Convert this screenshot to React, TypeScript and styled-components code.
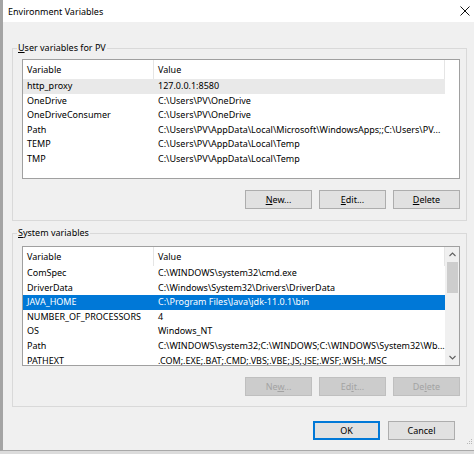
import styled, { createGlobalStyle } from "styled-components";

const GlobalStyle = createGlobalStyle`
  html, body {
    margin: 0;
    padding: 0;
    background: #dcdcdc;
  }
  body {
    font-family: "Noto Sans", "Segoe UI", sans-serif;
    font-size: 9px;
    color: #000;
  }
`;

const Window = styled.div`
  position: relative;
  width: 471px;
  height: 450px;
  border-left: 3px solid #a4a4a4;
  border-bottom: 1px solid #a9a9a9;
  background: #f0f0f0;
  overflow: hidden;
`;

const TitleBar = styled.div`
  height: 22px;
  background: #fff;
  display: flex;
  align-items: center;
  justify-content: space-between;
  padding: 0 2px 0 5px;
  font-size: 9px;
`;

const Group = styled.fieldset<{ $top: number; $padTop: number; $padBottom: number }>`
  margin: ${(p) => p.$top}px 7px 0 9px;
  padding: ${(p) => p.$padTop}px 6px ${(p) => p.$padBottom}px 9px;
  border: 1px solid #d9d9d9;
  min-width: 0;
`;

const Legend = styled.legend`
  margin-left: -5px;
  padding: 0 1px;
  line-height: 14px;
`;

const List = styled.div`
  width: 436px;
  height: 118px;
  border: 1px solid #a0a0a0;
  background: #fff;
  display: flex;
  overflow: hidden;
`;

const Table = styled.div`
  width: 422px;
  flex: none;
`;

const Row = styled.div<{ $state?: "hover" | "selected" }>`
  display: grid;
  grid-template-columns: 131px 1fr;
  height: 14.6px;
  line-height: 14.6px;
  white-space: nowrap;
  background: ${(p) =>
    p.$state === "selected" ? "#0078d7" : p.$state === "hover" ? "#e9e9e9" : "transparent"};
  color: ${(p) => (p.$state === "selected" ? "#fff" : "#000")};
`;

const Cell = styled.div`
  padding-left: 4px;
  overflow: hidden;
`;

const HeaderRow = styled.div`
  display: grid;
  grid-template-columns: 131px 1fr;
  height: 19px;
  line-height: 19px;
`;

const HeaderCell = styled.div`
  padding-left: 4px;
  border-right: 1px solid #e5e5e5;
`;

const Scrollbar = styled.div`
  width: 14px;
  background: #f0f0f0;
  display: flex;
  flex-direction: column;
  align-items: center;
`;

const ScrollArrow = styled.div`
  height: 15px;
  width: 14px;
  display: flex;
  align-items: center;
  justify-content: center;
`;

const Thumb = styled.div`
  width: 11px;
  height: 31px;
  background: #cdcdcd;
`;

const ButtonRow = styled.div<{ $top: number; $gap: number }>`
  display: flex;
  justify-content: flex-end;
  gap: ${(p) => p.$gap}px;
  margin-top: ${(p) => p.$top}px;
`;

const Button = styled.button<{ $default?: boolean }>`
  width: 67px;
  height: 19px;
  padding: 0;
  font: inherit;
  color: #000;
  background: #e1e1e1;
  border: ${(p) => (p.$default ? "2px solid #0078d7" : "1px solid #adadad")};

  &:disabled {
    background: #cccccc;
    border-color: #bfbfbf;
    color: #a3a3a3;
  }
`;

const Footer = styled.div`
  display: flex;
  justify-content: flex-end;
  gap: 8px;
  margin-top: 14px;
  padding-right: 19px;
`;

const Grip = styled.svg`
  position: absolute;
  right: 1px;
  bottom: 3px;
`;

type Variable = [string, string];

const userVars: Variable[] = [
  ["http_proxy", "127.0.0.1:8580"],
  ["OneDrive", "C:\\Users\\PV\\OneDrive"],
  ["OneDriveConsumer", "C:\\Users\\PV\\OneDrive"],
  ["Path", "C:\\Users\\PV\\AppData\\Local\\Microsoft\\WindowsApps;;C:\\Users\\PV..."],
  ["TEMP", "C:\\Users\\PV\\AppData\\Local\\Temp"],
  ["TMP", "C:\\Users\\PV\\AppData\\Local\\Temp"],
];

const systemVars: Variable[] = [
  ["ComSpec", "C:\\WINDOWS\\system32\\cmd.exe"],
  ["DriverData", "C:\\Windows\\System32\\Drivers\\DriverData"],
  ["JAVA_HOME", "C:\\Program Files\\Java\\jdk-11.0.1\\bin"],
  ["NUMBER_OF_PROCESSORS", "4"],
  ["OS", "Windows_NT"],
  ["Path", "C:\\WINDOWS\\system32;C:\\WINDOWS;C:\\WINDOWS\\System32\\Wb..."],
  ["PATHEXT", ".COM;.EXE;.BAT;.CMD;.VBS;.VBE;.JS;.JSE;.WSF;.WSH;.MSC"],
];

function Chevron({ up }: { up?: boolean }) {
  return (
    <svg width="7" height="5" viewBox="0 0 7 5">
      <path
        d={up ? "M0.5 4 L3.5 1 L6.5 4" : "M0.5 1 L3.5 4 L6.5 1"}
        fill="none"
        stroke="#606060"
        strokeWidth="1.1"
      />
    </svg>
  );
}

function VarList({
  rows,
  hover,
  selected,
  scroll,
}: {
  rows: Variable[];
  hover?: number;
  selected?: number;
  scroll?: boolean;
}) {
  return (
    <List>
      <Table>
        <HeaderRow>
          <HeaderCell>Variable</HeaderCell>
          <HeaderCell>Value</HeaderCell>
        </HeaderRow>
        {rows.map(([name, value], i) => (
          <Row
            key={name + i}
            $state={i === selected ? "selected" : i === hover ? "hover" : undefined}
          >
            <Cell>{name}</Cell>
            <Cell>{value}</Cell>
          </Row>
        ))}
      </Table>
      {scroll && (
        <Scrollbar>
          <ScrollArrow>
            <Chevron up />
          </ScrollArrow>
          <Thumb />
          <div style={{ flex: 1 }} />
          <ScrollArrow>
            <Chevron />
          </ScrollArrow>
        </Scrollbar>
      )}
    </List>
  );
}

export default function App() {
  return (
    <>
      <GlobalStyle />
      <Window>
        <TitleBar>
          <span>Environment Variables</span>
          <svg width="14" height="14" viewBox="0 0 14 14">
            <path d="M2.5 2.5 L11.5 11.5 M11.5 2.5 L2.5 11.5" stroke="#111" strokeWidth="1" />
          </svg>
        </TitleBar>

        <Group $top={19} $padTop={4} $padBottom={11}>
          <Legend>
            <u>U</u>ser variables for PV
          </Legend>
          <VarList rows={userVars} hover={0} />
          <ButtonRow $top={11} $gap={7}>
            <Button>
              <u>N</u>ew...
            </Button>
            <Button>
              <u>E</u>dit...
            </Button>
            <Button>
              <u>D</u>elete
            </Button>
          </ButtonRow>
        </Group>

        <Group $top={5} $padTop={6} $padBottom={10}>
          <Legend>
            <u>S</u>ystem variables
          </Legend>
          <VarList rows={systemVars} selected={2} scroll />
          <ButtonRow $top={11} $gap={7}>
            <Button disabled>
              Ne<u>w</u>...
            </Button>
            <Button disabled>
              Ed<u>i</u>t...
            </Button>
            <Button disabled>
              De<u>l</u>ete
            </Button>
          </ButtonRow>
        </Group>

        <Footer>
          <Button $default>OK</Button>
          <Button>Cancel</Button>
        </Footer>

        <Grip width="8" height="8" viewBox="0 0 8 8">
          <g fill="#b8b8b8">
            <rect x="6" y="0" width="1" height="1" />
            <rect x="4" y="2" width="1" height="1" />
            <rect x="6" y="2" width="1" height="1" />
            <rect x="2" y="4" width="1" height="1" />
            <rect x="4" y="4" width="1" height="1" />
            <rect x="6" y="4" width="1" height="1" />
          </g>
        </Grip>
      </Window>
    </>
  );
}
